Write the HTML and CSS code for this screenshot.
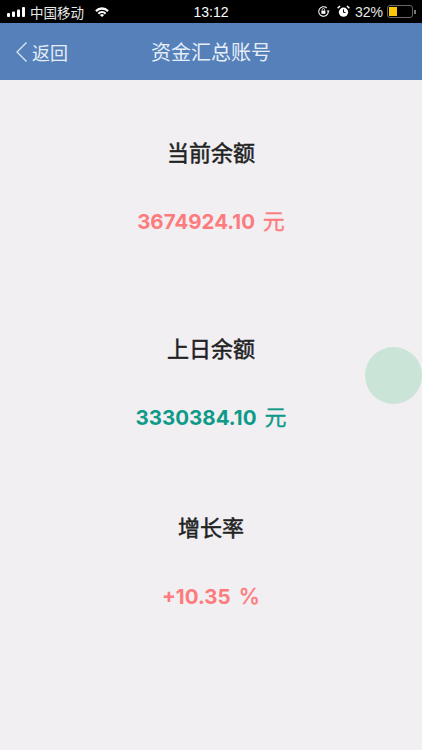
FILE: index.html
```html
<!DOCTYPE html>
<html lang="zh-CN">
<head>
  <meta charset="UTF-8" />
  <meta name="viewport" content="width=device-width, initial-scale=1.0"/>
  <title>资金汇总账号</title>
  <link rel="stylesheet" href="styles.css">
</head>
<body>

  <div class="status-bar">
    <div class="status-left">
      <svg class="signal" width="19" height="10" viewBox="0 0 19 10">
        <rect x="0" y="6" width="3" height="4" rx="1"/>
        <rect x="5" y="4.5" width="3" height="5.5" rx="1"/>
        <rect x="10" y="2.5" width="3" height="7.5" rx="1"/>
        <rect x="15" y="0" width="3" height="10" rx="1"/>
      </svg>
      <span class="carrier">中国移动</span>
      <svg class="wifi" width="14" height="10" viewBox="0 0 15 11">
        <path d="M0 3.6 A10.4 10.4 0 0 1 15 3.6 L13.3 5.5 A7.9 7.9 0 0 0 1.7 5.5 Z"/>
        <path d="M2.7 6.5 A6.4 6.4 0 0 1 12.3 6.5 L10.6 8.2 A4 4 0 0 0 4.4 8.2 Z"/>
        <path d="M5.3 9.1 A2.9 2.9 0 0 1 9.7 9.1 L7.5 11 Z"/>
      </svg>
    </div>
    <div class="status-time">13:12</div>
    <div class="status-right">
      <svg class="lock" width="13" height="13" viewBox="0 0 13 13">
        <path d="M11.3 6.5 A4.8 4.8 0 1 1 9.8 3" fill="none" stroke="#fff" stroke-width="1.1"/>
        <path d="M9.6 5.4 L12.8 5.4 L11.2 7.4 Z" fill="#fff"/>
        <rect x="4.4" y="5.6" width="4" height="3.2" fill="#fff"/>
        <path d="M5.2 5.6 V4.7 A1.2 1.2 0 0 1 7.6 4.7 V5.6" fill="none" stroke="#fff" stroke-width="0.8"/>
      </svg>
      <svg class="alarm" width="13" height="13" viewBox="0 0 13 13">
        <circle cx="6.5" cy="7.2" r="4.6" fill="#fff"/>
        <path d="M6.5 4.4 V7.4 H8.6" fill="none" stroke="#000" stroke-width="1"/>
        <path d="M0.6 3.2 L3 1 M12.4 3.2 L10 1" stroke="#fff" stroke-width="1.5"/>
      </svg>
      <span class="battery-text">32%</span>
      <div class="battery">
        <div class="battery-level"></div>
      </div>
      <div class="battery-tip"></div>
    </div>
  </div>

  <div class="nav-bar">
    <div class="back">
      <svg width="13" height="22" viewBox="0 0 13 22">
        <path d="M11.5 1.5 L2 11 L11.5 20.5" fill="none" stroke="#dce6f4" stroke-width="1.3"/>
      </svg>
      <span>返回</span>
    </div>
    <h1>资金汇总账号</h1>
  </div>

  <div class="content">
    <div class="item">
      <div class="item-title">当前余额</div>
      <div class="item-value red">3674924.10 <span class="unit">元</span></div>
    </div>
    <div class="item item-short">
      <div class="item-title">上日余额</div>
      <div class="item-value green">3330384.10 <span class="unit">元</span></div>
    </div>
    <div class="item">
      <div class="item-title">增长率</div>
      <div class="item-value red">+10.35 <span class="unit">%</span></div>
    </div>
  </div>

  <div class="float-ball"></div>

</body>
</html>
```

FILE: styles.css
```css
* {
  box-sizing: border-box;
}

body {
  margin: 0;
  height: 750px;
  overflow: hidden;
  position: relative;
  background: #f1eff2;
  font-family: "Inter", "Noto Sans CJK SC", sans-serif;
}

/* Status bar */
.status-bar {
  height: 23px;
  background: #000;
  color: #fff;
  display: flex;
  align-items: center;
  justify-content: space-between;
  padding: 0 6px 0 7px;
  font-family: "Liberation Sans", "Noto Sans CJK SC", sans-serif;
  font-size: 13px;
  position: relative;
}

.status-left, .status-right {
  display: flex;
  align-items: center;
}

.signal rect, .wifi path {
  fill: #fff;
}

.carrier {
  margin-left: 4px;
  font-size: 13.5px;
  color: #e8e8e8;
}

.wifi {
  margin-left: 11px;
}

.status-time {
  position: absolute;
  left: 0;
  right: 0;
  text-align: center;
  font-size: 14px;
}

.alarm {
  margin-left: 7px;
}

.battery-text {
  margin-left: 5px;
  font-size: 14px;
  color: #e8e8e8;
}

.battery {
  margin-left: 4px;
  width: 26px;
  height: 13px;
  border: 1px solid #666;
  border-radius: 3px;
  padding: 1px;
}

.battery-level {
  width: 8px;
  height: 100%;
  background: #fdc60a;
}

.battery-tip {
  width: 2px;
  height: 4px;
  margin-left: 1px;
  background: #777;
}

/* Nav */
.nav-bar {
  height: 57px;
  background: #5580ba;
  display: flex;
  align-items: center;
  justify-content: center;
  position: relative;
  color: #e6eef8;
}

.nav-bar h1 {
  margin: 0;
  font-size: 20px;
  font-weight: 400;
}

.back {
  position: absolute;
  left: 15px;
  top: 0;
  bottom: 0;
  display: flex;
  align-items: center;
  gap: 4px;
  font-size: 18px;
}

/* Content */
.content {
  display: flex;
  flex-direction: column;
  padding-top: 57px;
}

.item {
  display: flex;
  flex-direction: column;
  align-items: center;
  gap: 36px;
  height: 196px;
}

.item-short {
  height: 179px;
}

.item-title {
  font-size: 22px;
  line-height: 32px;
  color: #222;
  -webkit-text-stroke: 0.5px #222;
}

.item-value {
  font-size: 20.5px;
  line-height: 32px;
  font-weight: 700;
  word-spacing: 3px;
  white-space: pre;
}

.unit {
  font-size: 22px;
  font-weight: 400;
  -webkit-text-stroke: 0.3px currentColor;
}

.red {
  color: #fc7b7d;
}

.green {
  color: #0e9a88;
}

.float-ball {
  position: absolute;
  left: 365px;
  top: 347px;
  width: 57px;
  height: 57px;
  border-radius: 50%;
  background: #cbe4d8;
}
```
